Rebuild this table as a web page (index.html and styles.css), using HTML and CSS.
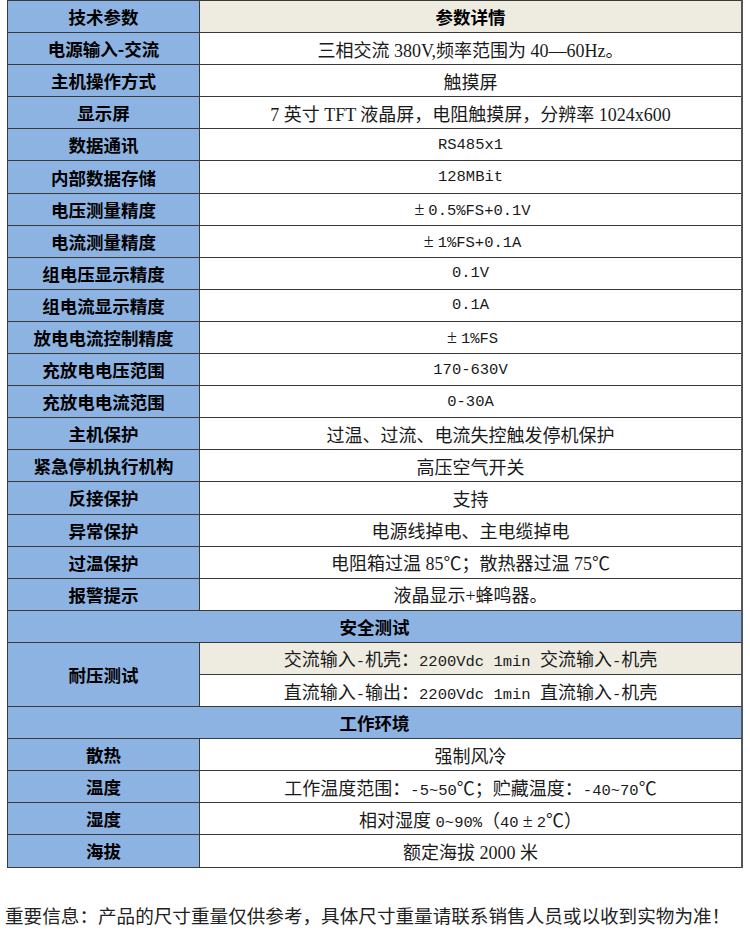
FILE: index.html
```html
<!DOCTYPE html>
<html lang="zh-CN">
<head>
<meta charset="utf-8">
<title>技术参数</title>
<link rel="stylesheet" href="styles.css">
</head>
<body>
<table class="spec">
  <colgroup><col class="c-name"><col class="c-val"></colgroup>
  <tr><th class="name">技术参数</th><th class="head-val">参数详情</th></tr>
  <tr><th class="name">电源输入-交流</th><td class="val">三相交流 380V,频率范围为 40—60Hz。</td></tr>
  <tr><th class="name">主机操作方式</th><td class="val">触摸屏</td></tr>
  <tr><th class="name">显示屏</th><td class="val">7 英寸 TFT 液晶屏，电阻触摸屏，分辨率 1024x600</td></tr>
  <tr><th class="name">数据通讯</th><td class="val mono">RS485x1</td></tr>
  <tr><th class="name">内部数据存储</th><td class="val mono">128MBit</td></tr>
  <tr><th class="name">电压测量精度</th><td class="val mono"><span class="pm">±</span>0.5%FS+0.1V</td></tr>
  <tr><th class="name">电流测量精度</th><td class="val mono"><span class="pm">±</span>1%FS+0.1A</td></tr>
  <tr><th class="name">组电压显示精度</th><td class="val mono">0.1V</td></tr>
  <tr><th class="name">组电流显示精度</th><td class="val mono">0.1A</td></tr>
  <tr><th class="name">放电电流控制精度</th><td class="val mono"><span class="pm">±</span>1%FS</td></tr>
  <tr><th class="name">充放电电压范围</th><td class="val mono">170-630V</td></tr>
  <tr><th class="name">充放电电流范围</th><td class="val mono">0-30A</td></tr>
  <tr><th class="name">主机保护</th><td class="val">过温、过流、电流失控触发停机保护</td></tr>
  <tr><th class="name">紧急停机执行机构</th><td class="val">高压空气开关</td></tr>
  <tr><th class="name">反接保护</th><td class="val">支持</td></tr>
  <tr><th class="name">异常保护</th><td class="val">电源线掉电、主电缆掉电</td></tr>
  <tr><th class="name">过温保护</th><td class="val">电阻箱过温 85℃；散热器过温 75℃</td></tr>
  <tr><th class="name">报警提示</th><td class="val">液晶显示+蜂鸣器。</td></tr>
  <tr><th class="section" colspan="2">安全测试</th></tr>
  <tr><th class="name" rowspan="2">耐压测试</th><td class="val beige">交流输入<span class="m">-</span>机壳：<span class="m">2200Vdc 1min </span>交流输入<span class="m">-</span>机壳</td></tr>
  <tr><td class="val">直流输入<span class="m">-</span>输出：<span class="m">2200Vdc 1min </span>直流输入<span class="m">-</span>机壳</td></tr>
  <tr><th class="section" colspan="2">工作环境</th></tr>
  <tr><th class="name">散热</th><td class="val">强制风冷</td></tr>
  <tr><th class="name">温度</th><td class="val">工作温度范围：<span class="m">-5~50</span>℃；贮藏温度：<span class="m">-40~70</span>℃</td></tr>
  <tr><th class="name">湿度</th><td class="val">相对湿度 <span class="m">0~90%</span>（<span class="m">40</span><span class="pm">±</span><span class="m">2</span>℃）</td></tr>
  <tr><th class="name">海拔</th><td class="val">额定海拔 2000 米</td></tr>
</table>
<p class="note">重要信息：产品的尺寸重量仅供参考，具体尺寸重量请联系销售人员或以收到实物为准！</p>
</body>
</html>
```

FILE: styles.css
```css
html, body {
  margin: 0;
  padding: 0;
  background: #ffffff;
}

.spec {
  margin: 0 0 0 7px;
  width: 736px;
  border-collapse: collapse;
  table-layout: fixed;
  border-right: 2px solid #555555;
}

.c-name { width: 192px; }

.spec tr { height: 32.1px; }

.spec th,
.spec td {
  border: 1px solid #3a3a3a;
  padding: 0;
  text-align: center;
  vertical-align: middle;
  white-space: nowrap;
}

.name,
.section,
.head-val {
  background: #8db3e2;
  color: #000000;
  font-family: "Noto Sans CJK SC", sans-serif;
  font-weight: bold;
  font-size: 17.5px;
}

.spec .head-val {
  background: #eeece1;
}

.val {
  background: #ffffff;
  color: #1a1a1a;
  font-family: "Liberation Serif", "Noto Sans CJK SC", serif;
  font-weight: normal;
  font-size: 18px;
}

.spec .beige { background: #eeece1; }

.mono,
.m {
  font-family: "Liberation Mono", "Noto Sans CJK SC", monospace;
  font-size: 15.5px;
}

.pm {
  display: inline-block;
  width: 18px;
  text-align: center;
  font-family: "Liberation Serif", serif;
  font-size: 18px;
}

.note {
  margin: 35px 0 0 5px;
  font-family: "Noto Sans CJK SC", sans-serif;
  font-size: 18.6px;
  line-height: 24px;
  color: #222222;
  white-space: nowrap;
}
```
